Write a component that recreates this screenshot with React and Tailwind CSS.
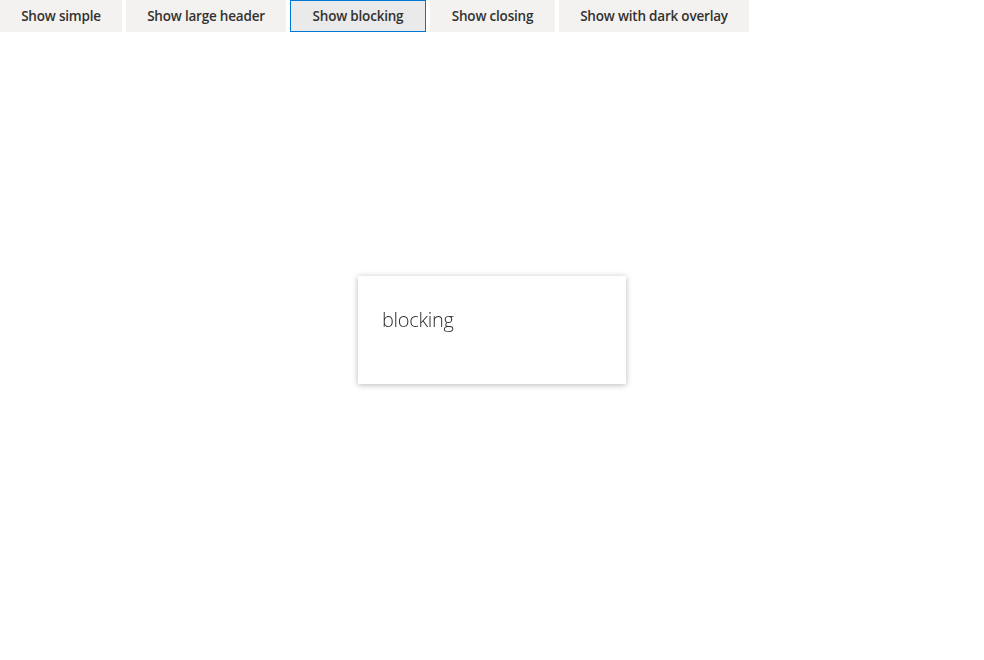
import { useState } from "react";

const buttons = [
  { id: "simple", label: "Show simple", w: "w-[122px]" },
  { id: "large", label: "Show large header", w: "w-[160px]" },
  { id: "blocking", label: "Show blocking", w: "w-[136px]" },
  { id: "closing", label: "Show closing", w: "w-[125px]" },
  { id: "dark", label: "Show with dark overlay", w: "w-[190px]" },
];

export default function App() {
  const [active, setActive] = useState("blocking");

  return (
    <div className="min-h-screen bg-white font-['Open_Sans',sans-serif] text-[#323130]">
      <div className="flex gap-1">
        {buttons.map((b) => (
          <button
            key={b.id}
            onClick={() => setActive(b.id)}
            className={`${b.w} h-8 pt-px text-[13.5px] font-semibold text-[#323130] tracking-[-0.2px] ${
              active === b.id
                ? "bg-[#eaeaea] border border-[#0078d4]"
                : "bg-[#f3f2f1] border border-[#f3f2f1]"
            }`}
          >
            {b.label}
          </button>
        ))}
      </div>

      {active && (
        <div className="fixed inset-0 flex items-center justify-center">
          <div className="w-[268px] h-[108px] bg-white shadow-[0_1px_6px_rgba(0,0,0,0.28)]">
            <div className="pt-[30px] pl-[24px] text-[20px] leading-[28px] font-light text-[#323130] tracking-[-0.3px]">
              blocking
            </div>
          </div>
        </div>
      )}
    </div>
  );
}
